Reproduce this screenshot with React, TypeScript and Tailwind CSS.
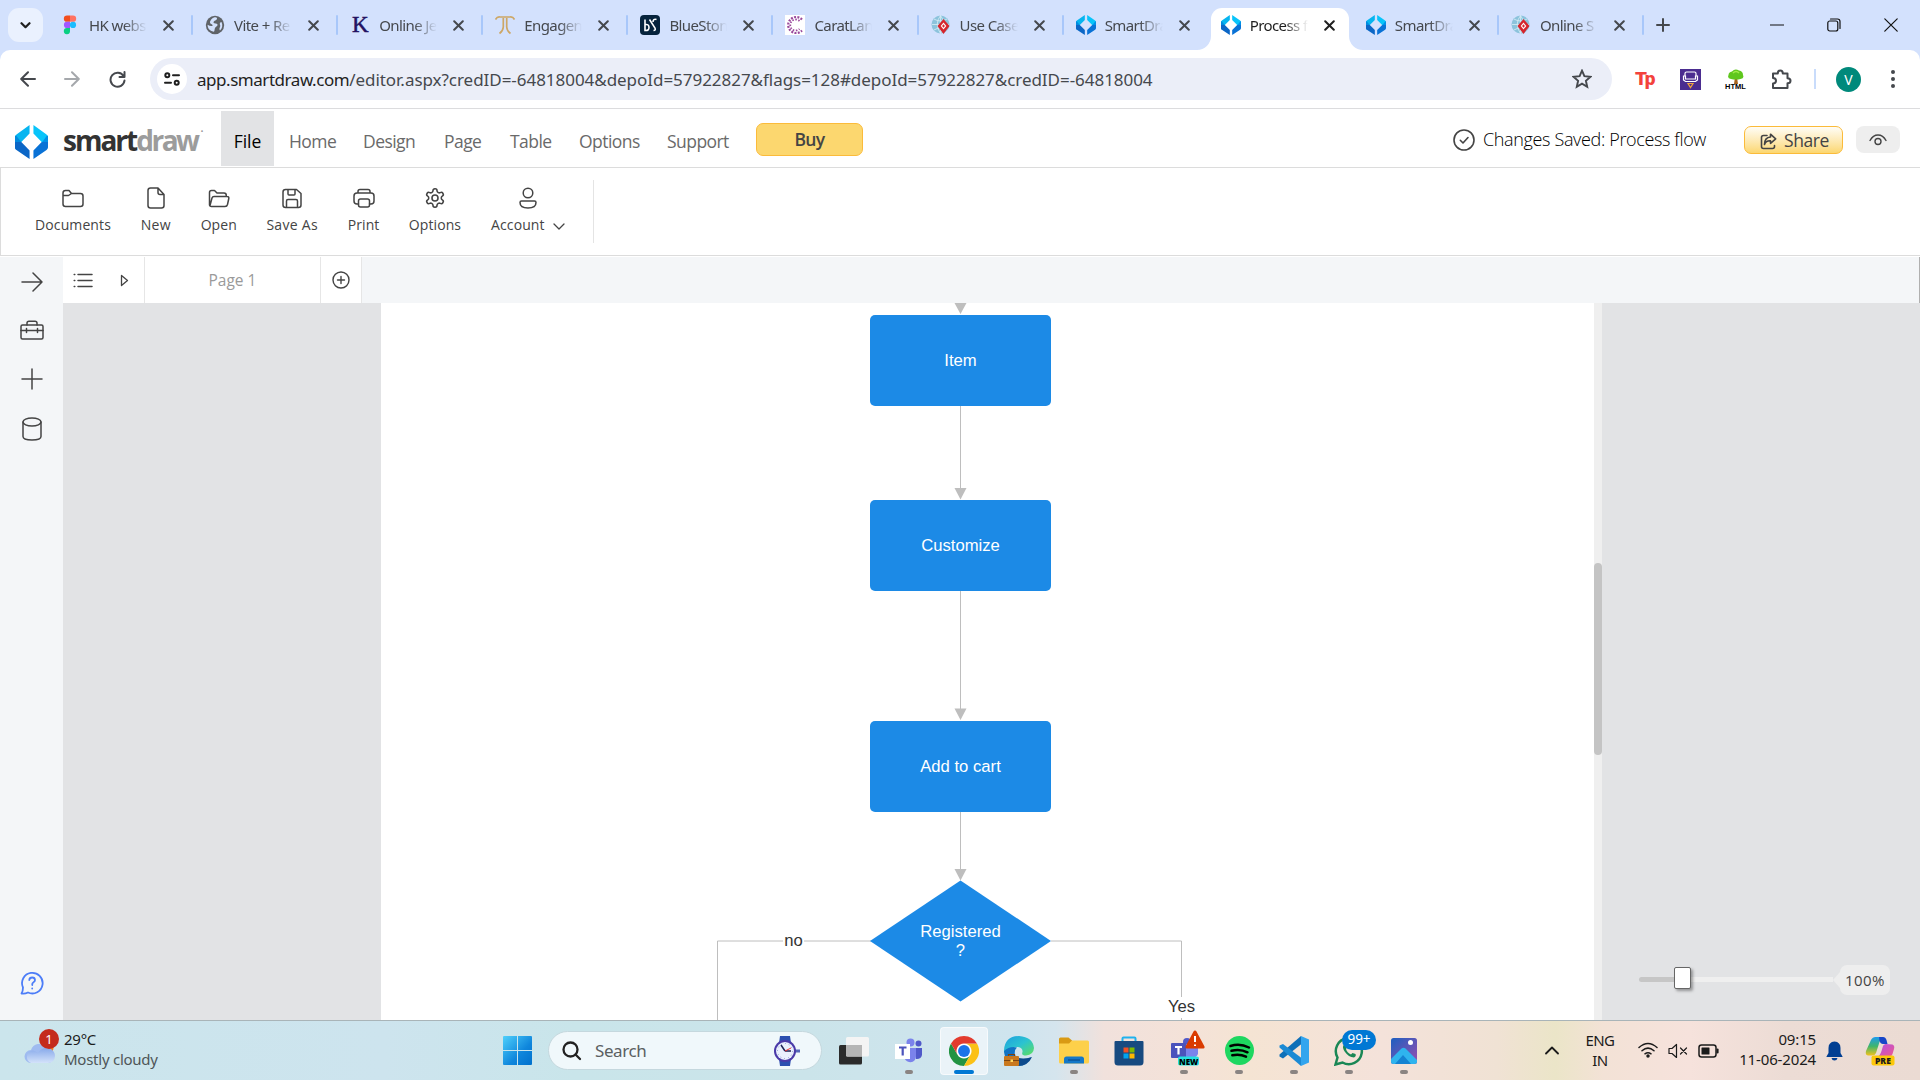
import React from "react";

const UI = "font-['Noto_Sans',sans-serif]";
const PLEX = "font-['Open_Sans',sans-serif]";

type Kids = { children?: React.ReactNode };

function T({ className = "", children }: Kids & { className?: string }) {
  return <span className={"inline-block whitespace-nowrap " + className}>{children}</span>;
}

function Line({ w, h, vb, sw = 1.5, className = "", children }: Kids & { w: number; h: number; vb?: string; sw?: number; className?: string }) {
  return (
    <svg width={w} height={h} viewBox={vb ?? `0 0 ${w} ${h}`} fill="none" stroke="currentColor" strokeWidth={sw} strokeLinecap="round" strokeLinejoin="round" className={"shrink-0 " + className}>
      {children}
    </svg>
  );
}

/* ---------- favicons ---------- */

function SmartDrawMark({ w, h }: { w: number; h: number }) {
  return (
    <svg width={w} height={h} viewBox="0 0 34 34" preserveAspectRatio="none" className="shrink-0">
      <path d="M15 0 1.5 9.5Q0 10.500 0 12L0 17H6.500L15 8.500Z" fill="#06b5f0" />
      <path d="M0 11V23Q0 24 1.500 25L6 17 6.500 17 1 10.500Z" fill="#008ade" />
      <path d="M0 17V22Q0 24 1.500 25L15 34V25.500L6.500 17Z" fill="#0b66c6" />
      <path d="M19 0 32.500 9.500Q34 10.500 34 12V17H27.500L19 8.500Z" fill="#08c4fa" />
      <path d="M34 11V23L28 17 33 10.500Z" fill="#0090e6" />
      <path d="M34 17V22Q34 24 32.500 25L19 34V25.500L27.500 17Z" fill="#0972d6" />
    </svg>
  );
}

function Figma() {
  return (
    <svg width="20" height="20" viewBox="0 0 20 20">
      <path d="M10 .5H7a3.100 3.100 0 0 0 0 6.300h3Z" fill="#f24e1e" />
      <path d="M10 .5h3a3.100 3.100 0 0 1 0 6.300h-3Z" fill="#ff7262" />
      <path d="M10 6.800H7A3.100 3.100 0 0 0 7 13h3Z" fill="#a259ff" />
      <circle cx="13" cy="9.900" r="3.100" fill="#1abcfe" />
      <path d="M7 13h3v3.200A3.100 3.100 0 1 1 7 13Z" fill="#0acf83" />
    </svg>
  );
}

function Globe() {
  return (
    <svg width="20" height="20" viewBox="0 0 20 20">
      <circle cx="10" cy="10" r="9.200" fill="#5f6368" />
      <path d="M9 2.500c3-.6 3.500.7 2.700 2-1 1.500-3.200 1.200-3.200 2.800 0 1.800 3.400.6 4 2.200.5 1.300-1.700 2-2.500 3.600-.6 1.300-.2 3.500-1.300 3.700C4.500 16 2.500 13 2.600 9.800c1.600 1 3 1.400 4.300 1.200 1.500-.3.500-1.800-.7-2.100-1.400-.4-1.600-2-.6-3.400C6.400 4.200 7.200 3 9 2.500ZM16.500 7c1.500 3 .8 6.500-1.500 8.500-.7-1-.7-2.300 0-3.500.8-1.300-.3-2-.2-3.200.1-1 .8-1.600 1.700-1.800Z" fill="#d3e1fd" />
    </svg>
  );
}

function LetterK() {
  return <span className="font-['Liberation_Serif',serif] text-[23px] leading-5 text-[#231262] [-webkit-text-stroke:0.5px_#231262]">K</span>;
}

function TanishqMark() {
  return (
    <svg width="20" height="20" viewBox="0 0 20 20" fill="none" stroke="#cda766" strokeWidth="1.700">
      <path d="M.5 4.500Q2 1.500 5 2H15Q18 1.500 19.500 4.500M8.300 3V12Q8 16 4.500 18.500M11.700 3V12Q12 16 15.500 18.500" />
    </svg>
  );
}

function BlueStone() {
  return (
    <svg width="20" height="20" viewBox="0 0 20 20" fill="none" stroke="#fff" strokeWidth="1.600">
      <rect width="20" height="20" rx="4" fill="#06233c" stroke="none" />
      <path d="M5 4.500V15.500Q9 16 9 12.500T5.500 9.500M9.500 4.500 15 13Q16 15.500 13.500 15.500M16.500 4.500Q13 3.500 13 7" />
    </svg>
  );
}

function CaratLane() {
  return (
    <svg width="20" height="20" viewBox="0 0 20 20" fill="none" stroke="#9a4a9c">
      <rect width="20" height="20" fill="#fff" stroke="none" />
      <path d="M17 4.500A8 8 0 1 0 17 15.500" strokeWidth="2.200" strokeDasharray="2 1.300" />
      <path d="M14.500 6A5.500 5.500 0 1 0 14.500 14" strokeWidth="1.800" strokeDasharray="1.500 1.500" />
    </svg>
  );
}

function Paradigm() {
  return (
    <svg width="20" height="20" viewBox="0 0 20 20">
      <circle cx="9.500" cy="9.500" r="9" fill="#8cc3dc" />
      <path d="M1 9.500H18M9.500 .5V18M3 4Q9.500 8 16 4M3 15Q9.500 11 16 15M9.500 .5Q3 9 9.500 18.500M9.500 .5Q16 9 9.500 18.500" stroke="#d9edf5" fill="none" strokeWidth=".8" />
      <path d="M12.500 4 18.500 11 12.500 19 6.500 11Z" fill="#d6252d" />
      <path d="M12.500 7.500 15.300 11 12.500 14.500 9.700 11Z" fill="#fff" />
      <path d="M12.500 9.300 13.900 11 12.500 12.800 11.100 11Z" fill="#d6252d" />
    </svg>
  );
}

const SdFav = () => <SmartDrawMark w={20} h={20} />;

const tabs: { icon: React.ReactNode; title: string; active?: boolean; divider?: boolean }[] = [
  { icon: <Figma />, title: "HK webs", divider: true },
  { icon: <Globe />, title: "Vite + Re", divider: true },
  { icon: <LetterK />, title: "Online Je", divider: true },
  { icon: <TanishqMark />, title: "Engagen", divider: true },
  { icon: <BlueStone />, title: "BlueSton", divider: true },
  { icon: <CaratLane />, title: "CaratLan", divider: true },
  { icon: <Paradigm />, title: "Use Case", divider: true },
  { icon: <SdFav />, title: "SmartDra" },
  { icon: <SdFav />, title: "Process f", active: true },
  { icon: <SdFav />, title: "SmartDra", divider: true },
  { icon: <Paradigm />, title: "Online S", divider: true },
];

function TabStrip() {
  return (
    <div className={"flex h-[50px] bg-[#d3e1fd] text-[#45484d] " + UI}>
      <div className="mt-2 ml-2 flex h-[34px] w-[35px] items-center justify-center rounded-[11px] bg-[#eaf1fe] text-[#1f1f1f]">
        <Line w={11} h={7} sw={2.200}><path d="M1.500 1.200 5.500 5.200 9.500 1.200" /></Line>
      </div>
      <div className="ml-[4px] flex">
        {tabs.map((t, i) => (
          <div key={i} className="relative flex h-[50px] w-[145.100px] items-center pl-[13px]">
            {t.active && (
              <div className="absolute top-[7.500px] bottom-0 left-[3px] w-[138px] rounded-t-[11px] bg-white">
                <svg width="14" height="14" className="absolute bottom-0 -left-[14px]"><path d="M14 0V14H0A14 14 0 0 0 14 0Z" fill="#fff" /></svg>
                <svg width="14" height="14" className="absolute -right-[14px] bottom-0"><path d="M0 0V14H14A14 14 0 0 1 0 0Z" fill="#fff" /></svg>
              </div>
            )}
            <div className="relative flex w-5 shrink-0 justify-center">{t.icon}</div>
            <div className={"relative ml-[9px] w-[58px] text-[15px] leading-[22px] tracking-[-0.6px] whitespace-nowrap [mask-image:linear-gradient(to_right,#000_60%,transparent)] " + (t.active ? "text-[#1f1f1f]" : "")}>{t.title}</div>
            <Line w={11} h={11} sw={2} className={"relative ml-[16px] " + (t.active ? "text-[#1f1f1f]" : "")}><path d="M1.200 1.200 9.800 9.800M9.800 1.200 1.200 9.800" /></Line>
            {t.divider && <div className="absolute top-[15px] right-[-1px] h-5 w-[2px] rounded bg-[#a8c7fa]" />}
          </div>
        ))}
      </div>
      <div className="flex flex-1 items-center pl-[13px]">
        <Line w={14} h={14} sw={2}><path d="M7 1V13M1 7H13" /></Line>
      </div>
      <div className="flex items-center gap-[43px] pr-[22px] text-[#111]">
        <Line w={14} h={14} sw={1.200}><path d="M.5 7H13.500" /></Line>
        <Line w={14} h={14} sw={1.200}><rect x=".8" y="3" width="10" height="10" rx="2" /><path d="M3.500 1H10.500Q13 1 13 3.500V10.500" /></Line>
        <Line w={14} h={14} sw={1.200}><path d="M.8 .8 13.200 13.200M13.200 .8 .8 13.200" /></Line>
      </div>
    </div>
  );
}

function AddressBar() {
  return (
    <div className="bg-[#d3e1fd]">
      <div className={"flex h-[59px] items-center rounded-t-[10px] border-b border-[#dcdcde] bg-white text-[#45484d] " + UI}>
        <Line w={16} h={16} sw={2} className="ml-[20px]"><path d="M15 8H1.500M8 1.200 1.200 8 8 14.800" /></Line>
        <Line w={16} h={16} sw={2} className="ml-[28px] text-[#a5a8ac]"><path d="M1 8H14.500M8 1.200 14.800 8 8 14.800" /></Line>
        <Line w={17} h={17} sw={2} className="ml-[29px]"><path d="M14.500 5A7 7 0 1 0 15.500 9.500M15.500 1V6H10.500" /></Line>
        <div className="ml-[24px] flex h-[42px] w-[1462px] items-center rounded-full bg-[#ebeef8]">
          <div className="ml-[7px] flex size-[30px] items-center justify-center rounded-full bg-white text-[#1f1f1f]">
            <Line w={16} h={14} sw={2}><circle cx="3.300" cy="3.300" r="2" /><path d="M9 3.300H15M1 10.700H7" /><circle cx="12.700" cy="10.700" r="2" /></Line>
          </div>
          <div className="ml-[10px] flex-1 pt-[2px] text-[17px] leading-6">
            <T className="tracking-[-0.460px] text-[#1f1f1f]">app.smartdraw.com</T>
            <T className="tracking-[-0.040px]">/editor.aspx?credID=-64818004&amp;depoId=57922827&amp;flags=128#depoId=57922827&amp;credID=-64818004</T>
          </div>
          <Line w={20} h={20} sw={1.900} className="mr-[20px]"><path d="M10 1.700 12.400 7.200 18.500 7.800 13.900 11.800 15.200 17.700 10 14.600 4.800 17.700 6.100 11.800 1.500 7.800 7.600 7.200Z" strokeLinejoin="miter" /></Line>
        </div>
        <div className="ml-[23px] flex h-5 w-5 items-center font-['Roboto',sans-serif] text-[19px] font-black tracking-[-1.500px] text-[#f3423c]">Tp</div>
        <svg width="21" height="21" viewBox="0 0 21 21" className="ml-[25px]" fill="none" stroke="#fff" strokeWidth="1.200">
          <rect width="21" height="21" fill="#4b2d90" stroke="none" />
          <path d="M5 7.500V4.500Q5 3 6.500 3H14.500Q16 3 16 4.500V7.500M3.500 7H5.500V10H15.500V7H17.500V11L15.500 12.500H5.500L3.500 11Z" />
          <path d="M8 14.500H13L10.500 18.500Z" stroke="#f2a33a" />
        </svg>
        <div className="ml-[24px] flex h-[21px] w-[21px] flex-col items-center">
          <svg width="18" height="15" viewBox="0 0 18 15" className="shrink-0">
            <path d="M8 8H10L11 15H7Z" fill="#a8641e" />
            <path d="M4 10Q0 9.500 1.500 6 1.500 3 5 2.500 8-1 12 1.500 16 2 16 6 17.500 9.500 13.500 10Q9 11 4 10Z" fill="#5fc71e" />
            <path d="M6 4Q9 1 12 4" stroke="#a0ea4a" strokeWidth="1.500" fill="none" />
          </svg>
          <span className="-mt-px font-['Liberation_Sans',sans-serif] text-[7.500px] leading-[7px] font-bold text-black">HTML</span>
        </div>
        <Line w={21} h={21} sw={2} className="ml-[25px]"><path d="M2 4.500H6.800Q6.800 1.500 9.300 1.500T11.800 4.500H16.500V9.300Q19.500 9.300 19.500 11.800T16.500 14.300V19H2V14.500Q5 14.500 5 11.800T2 9Z" /></Line>
        <div className="ml-[22px] h-5 w-[2px] bg-[#c9dcfb]" />
        <div className="ml-[20px] flex size-[25px] items-center justify-center rounded-full bg-[#00897b] text-[14px] text-white">V</div>
        <svg width="4" height="20" className="ml-[30px]" fill="#45484d"><circle cx="2" cy="3" r="2" /><circle cx="2" cy="10" r="2" /><circle cx="2" cy="17" r="2" /></svg>
      </div>
    </div>
  );
}

/* ---------- SmartDraw header ---------- */

function Header() {
  return (
    <div className={"flex h-[59px] border-b border-[#dcdcdc] bg-white text-[17.500px] leading-6 text-[#6a6a6a] " + PLEX}>
      <div className="flex w-[221px] items-center pl-[15px]">
        <div className="pt-[7px]"><SmartDrawMark w={33} h={34} /></div>
        <div className="ml-[15px] flex pt-[3px] text-[28px] font-bold text-[#333]">
          <T className="tracking-[-2px]">smart</T>
          <T className="tracking-[-2.500px] text-[#9c9c9c]">draw</T>
          <span className="mt-[-1px] ml-[3px] text-[8px] leading-[8px] font-normal text-[#9c9c9c]">•</span>
        </div>
      </div>
      <div className="mt-[2px] flex h-[55px] w-[53px] items-center justify-center bg-[#e2e3e5] pt-[5px] text-black">File</div>
      <div className="ml-[15px] flex items-center pt-[6px] tracking-[-0.550px]">
        <div className="w-[74px]">Home</div>
        <div className="w-[81px]">Design</div>
        <div className="w-[66px]">Page</div>
        <div className="w-[69px]">Table</div>
        <div className="w-[88px]">Options</div>
        <div className="w-[89px]">Support</div>
      </div>
      <div className="mt-[14px] flex h-[33px] w-[107px] items-center justify-center rounded-[7px] border border-[#fbbb3a] bg-[#fcd76f] pb-[2px] font-semibold tracking-[-0.600px] text-[#444]">Buy</div>
      <div className="ml-auto flex items-start pr-[20px]">
        <Line w={22} h={22} sw={1.600} className="mt-[20px] text-[#444]"><circle cx="11" cy="11" r="10" /><path d="M7.300 11.300 10 14 15 8.500" /></Line>
        <div className="mt-[18px] ml-[8px] w-[261px] text-[18px] font-light tracking-[-0.350px] text-black">Changes Saved: Process flow</div>
        <div className="mt-[17px] flex h-7 w-[99px] items-center rounded-[7px] border border-[#fbbb3a] bg-linear-to-b from-[#fffdf6] to-[#fcd76f] pl-[15px] text-[#444]">
          <Line w={17} h={17} sw={1.600} className="mt-[3px]"><path d="M7 2.500H3.500Q1.500 2.500 1.500 4.500V13.500Q1.500 15.500 3.500 15.500H12.500Q14.500 15.500 14.500 13.500V12.500M10.500 1.200 15.700 5.800 10.500 10.300V7.800Q6 7.500 4.500 11.500 4.500 4.500 10.500 4Z" /></Line>
          <div className="ml-[7px] tracking-[-0.400px]">Share</div>
        </div>
        <div className="mt-[17px] ml-[13px] flex h-[27px] w-11 items-center justify-center rounded-[8px] bg-[#eee] text-[#444]">
          <Line w={18} h={12} sw={1.400}><path d="M1 6.500Q4 1 9 1T17 6.500" /><circle cx="9" cy="7.500" r="3" /></Line>
        </div>
      </div>
    </div>
  );
}

function RibbonItem({ cls, icon, children }: Kids & { cls: string; icon: React.ReactNode }) {
  return (
    <div className={"flex flex-col items-center " + cls}>
      <div className="flex h-6 items-center justify-center">{icon}</div>
      <div className="mt-[5px] flex h-5 items-center">{children}</div>
    </div>
  );
}

function Ribbon() {
  return (
    <div className={"flex h-[88px] gap-[29.400px] border-b border-l border-[#dcdcdc] bg-white pt-[18px] pl-[34px] text-[14px] leading-5 tracking-[0.100px] text-[#444] " + PLEX}>
      <RibbonItem cls="w-[76px]" icon={<Line w={22} h={19}><path d="M1 4Q1 1.500 3.500 1.500H7L9.500 4.500H18.500Q21 4.500 21 7V15Q21 17.500 18.500 17.500H3.500Q1 17.500 1 15ZM1 6.500H6.500L9.500 4.500" /></Line>}><T>Documents</T></RibbonItem>
      <RibbonItem cls="w-[31px]" icon={<Line w={18} h={22}><path d="M3.500 1H11L17 7.500V18.500Q17 21 14.500 21H3.500Q1 21 1 18.500V3.500Q1 1 3.500 1ZM11 1V5.500Q11 7.500 13 7.500H17" /></Line>}><T className="tracking-[0.400px]">New</T></RibbonItem>
      <RibbonItem cls="w-[36px]" icon={<Line w={22} h={19}><path d="M1.500 16V3.500Q1.500 1.500 3.500 1.500H6.500L9 4H16Q18.300 4 18.300 6.500V7.500M2 16.500 4 9Q4.500 7.500 6 7.500H19Q21.200 7.500 20.800 9.500L19.500 15.500Q19 17.500 17 17.500H3.500Q1.500 17.500 1.500 15.500" /></Line>}><T>Open</T></RibbonItem>
      <RibbonItem cls="w-[52px]" icon={<Line w={20} h={21}><path d="M3.500 1.500H14.500L19 5.500V17Q19 19.500 16.500 19.500H3.500Q1 19.500 1 17V4Q1 1.500 3.500 1.500ZM6 1.500V6Q6 7 7 7H12Q13 7 13 6V1.500M4.500 19.500V13Q4.500 11.500 6 11.500H14Q15.500 11.500 15.500 13V19.500" /></Line>}><T className="tracking-[0.300px]">Save As</T></RibbonItem>
      <RibbonItem cls="w-[32px]" icon={<Line w={22} h={20}><path d="M5.500 16H4Q1 16 1 13V8Q1 5 4 5H18Q21 5 21 8V13Q21 16 18 16H16.500M5 5V3.500Q5 1.500 7 1.500H15Q17 1.500 17 3.500V5" /><rect x="5.500" y="11" width="11" height="8" rx="2" /></Line>}><T>Print</T></RibbonItem>
      <RibbonItem cls="w-[52px]" icon={<Line w={22} h={22} vb="0 0 24 24" sw={1.700}><path d="M12.220 2h-.44a2 2 0 0 0-2 2v.18a2 2 0 0 1-1 1.730l-.43.25a2 2 0 0 1-2 0l-.15-.08a2 2 0 0 0-2.730.73l-.22.38a2 2 0 0 0 .73 2.730l.15.1a2 2 0 0 1 1 1.720v.51a2 2 0 0 1-1 1.740l-.15.09a2 2 0 0 0-.73 2.730l.22.38a2 2 0 0 0 2.730.73l.15-.08a2 2 0 0 1 2 0l.43.25a2 2 0 0 1 1 1.730V20a2 2 0 0 0 2 2h.44a2 2 0 0 0 2-2v-.18a2 2 0 0 1 1-1.730l.43-.25a2 2 0 0 1 2 0l.15.08a2 2 0 0 0 2.730-.73l.22-.39a2 2 0 0 0-.73-2.730l-.15-.08a2 2 0 0 1-1-1.740v-.5a2 2 0 0 1 1-1.740l.15-.09a2 2 0 0 0 .73-2.730l-.22-.38a2 2 0 0 0-2.730-.73l-.15.08a2 2 0 0 1-2 0l-.43-.25a2 2 0 0 1-1-1.730V4a2 2 0 0 0-2-2z" /><circle cx="12" cy="12" r="3.300" /></Line>}><T>Options</T></RibbonItem>
      <RibbonItem cls="w-[75px]" icon={<Line w={18} h={22}><circle cx="9" cy="6" r="4.800" /><path d="M2.500 14H15.500Q17 14 17 15.500 17 21 9 21T1 15.500Q1 14 2.500 14Z" /></Line>}>
        <T>Account</T>
        <Line w={12} h={7} sw={1.300} className="mt-[3px] ml-[8px]"><path d="M1 1 6 6 11 1" /></Line>
      </RibbonItem>
      <div className="-mt-[6px] -ml-[2px] h-[63px] w-px bg-[#e4e4e4]" />
    </div>
  );
}

function PageTabs() {
  return (
    <div className={"flex h-[46px] w-full border-r border-[#b0b0b0] bg-[#f4f6f8] text-[#444] " + PLEX}>
      <div className="flex w-[82px] items-center border-r border-[#e6e6e6] bg-white pl-[10px]">
        <Line w={20} h={17} sw={1.500}><path d="M5 2.500H19M5 8.500H19M5 14.500H19M1.200 2.500H1.800M1.200 8.500H1.800M1.200 14.500H1.800" /></Line>
        <Line w={9} h={13} sw={1.300} className="ml-[27px]"><path d="M1.500 1.500 7.500 6.500 1.500 11.500Z" /></Line>
      </div>
      <div className="flex w-[176px] items-center justify-center border-r border-[#e6e6e6] bg-white pt-[2px] text-[15.500px] text-[#9a9a9a]">Page 1</div>
      <div className="flex w-[41px] items-center justify-center border-r border-[#e6e6e6] bg-white">
        <Line w={18} h={18} sw={1.400}><circle cx="9" cy="9" r="8" /><path d="M9 5.500V12.500M5.500 9H12.500" /></Line>
      </div>
    </div>
  );
}

function SideBar() {
  return (
    <div className="flex w-[63px] flex-col items-center bg-[#f4f6f8] text-[#444]">
      <Line w={22} h={20} className="mt-[15px]"><path d="M1 10H21M12 1 21 10 12 19" /></Line>
      <Line w={24} h={20} className="mt-[28px]"><rect x="1" y="5" width="22" height="14" rx="1.500" /><path d="M7 5V3Q7 1.200 9 1.200H15Q17 1.200 17 3V5M1 10.500H23M6.500 8.500V12.500M17.500 8.500V12.500" /></Line>
      <Line w={22} h={22} className="mt-[28px]"><path d="M11 1V21M1 11H21" /></Line>
      <Line w={20} h={24} className="mt-[27px]"><ellipse cx="10" cy="5" rx="9" ry="4" /><path d="M1 5V19.500Q1 23 10 23T19 19.500V5" /></Line>
      <Line w={24} h={24} sw={1.800} className="mt-auto mb-[25px] text-[#4c7df8]"><path d="M3 16.500A10.300 10.300 0 1 1 8 21.500Q5 23 1.500 22.500 3 20 3 16.500Z" /><path d="M9.300 9Q9.500 6.500 12.200 6.500T15 9Q15 10.500 13.500 11.300T12.200 14M12.200 17.300V17.500" /></Line>
    </div>
  );
}

/* ---------- flowchart ---------- */

function Node({ cls, children }: Kids & { cls: string }) {
  return <div className={"absolute left-[489px] flex h-[91px] w-[181px] items-center justify-center rounded-[5px] bg-[#1c8ae6] text-white " + cls}>{children}</div>;
}

function Page() {
  return (
    <div className="relative w-[1213px] overflow-hidden bg-white font-['Liberation_Sans',sans-serif] text-[16.670px] leading-[19px]">
      <svg width="1213" height="717" className="absolute inset-0" fill="none" stroke="#bebebe">
        <path d="M579.500 102V192M579.500 288V412M579.500 508V572M490 638H336.500V720M670 638H800.500V720" />
        <path d="M573.500 0H585.500L579.500 11ZM573.500 185H585.500L579.500 196.500ZM573.500 405.500H585.500L579.500 417ZM573.500 566H585.500L579.500 577.500Z" fill="#bebebe" stroke="none" />
        <path d="M579.500 577.500 670 638 579.500 698.500 489 638Z" fill="#1c8ae6" stroke="none" />
      </svg>
      <Node cls="top-[11.500px]">Item</Node>
      <Node cls="top-[197px]">Customize</Node>
      <Node cls="top-[417.500px]">Add to cart</Node>
      <div className="absolute top-[619px] left-[489px] w-[181px] text-center text-white">Registered<br />?</div>
      <div className="absolute top-[628px] left-[402px] w-[21px] bg-white text-center text-[#333]">no</div>
      <div className="absolute top-[694px] left-[785px] h-[21px] w-[31px] bg-white text-center text-[#333]">Yes</div>
    </div>
  );
}

function ZoomControl() {
  return (
    <div className="flex flex-1 flex-col justify-end bg-[#e2e3e5]">
      <div className="mb-[25px] ml-[37px] flex h-[30px] items-center">
        <div className="-mt-[2px] h-[5px] w-[35px] rounded-l-full bg-[#c6c6c6]" />
        <div className="z-10 -mt-[4px] h-[22px] w-[17px] rounded-[2px] border border-[#666] bg-white shadow-[2px_2px_3px_rgba(0,0,0,0.35)]" />
        <div className="-mt-[2px] h-[5px] w-[142px] bg-[#efefef]" />
        <svg width="7" height="16"><path d="M0 8 7 0V16Z" fill="#eee" /></svg>
        <div className={"flex h-[30px] w-[50px] items-center rounded-[7px] bg-[#eee] pl-[5px] text-[15px] tracking-[0.400px] text-[#444] " + PLEX}>100%</div>
      </div>
    </div>
  );
}

/* ---------- Windows taskbar ---------- */

function Cell({ mark, active, children }: Kids & { mark?: boolean; active?: boolean }) {
  return (
    <div className={"relative flex size-12 items-center justify-center rounded-[4px] " + (active ? "border border-white/60 bg-[#eaf3f8]" : "")}>
      {children}
      {mark && <div className="absolute bottom-px h-1 w-2 rounded-full bg-[#8a8482]" />}
      {active && <div className="absolute bottom-0 h-1 w-5 rounded-full bg-[#0078d4]" />}
    </div>
  );
}

function Chrome() {
  return (
    <svg width="30" height="30" viewBox="0 0 48 48">
      <circle cx="24" cy="24" r="12" fill="#fff" />
      <path d="M13.609 30.003 3.218 12.006A23.994 23.994 0 0 0 24.002 48L34.393 30.003A11.985 11.985 0 0 1 13.609 30.003Z" fill="#229342" />
      <path d="M34.391 30.003 24.001 48A23.994 23.994 0 0 0 44.780 12.003H24A11.985 11.985 0 0 1 34.391 30.003Z" fill="#fbc116" />
      <path d="M24.002 12H44.780A23.994 23.994 0 0 0 3.218 12.006L13.609 30.002A11.985 11.985 0 0 1 24.002 12Z" fill="#e33b2e" />
      <circle cx="24" cy="24" r="9.500" fill="#1a73e8" />
    </svg>
  );
}

function Taskbar() {
  return (
    <div className={"flex h-[60px] items-center border-t border-[#a9b4b8] bg-[linear-gradient(90deg,#cbe5ec_0%,#cde4ee_20%,#c9e5ea_30%,#cbe4ea_42%,#cfe4ee_53%,#d5e5ee_55%,#f1e1dc_57.500%,#f4e2d8_62%,#f5e4d3_65%,#f4e2da_72%,#f0e2d4_78%,#ebe5c8_81%,#f3e2d6_83.500%,#f6e2dc_88%,#ecdcd5_93%,#ebdbd3_100%)] text-[15px] text-[#1b1b1b] " + UI}>
      <div className="flex w-[503px] items-center pl-[24px]">
        <div className="relative">
          <svg width="32" height="24" viewBox="0 0 32 24" className="mt-[4px]">
            <defs><linearGradient id="cl" x1="0" y1="0" x2="0" y2="1"><stop offset="0" stopColor="#87a9ea" /><stop offset="1" stopColor="#d3e2fa" /></linearGradient></defs>
            <circle cx="24" cy="7" r="5.500" fill="#f47b1c" />
            <path d="M7 22A6.500 6.500 0 0 1 7 9 8.500 8.500 0 0 1 22 6.500 8 8 0 0 1 25 22Z" fill="#9fbbf0" />
            <path d="M7 22A6.500 6.500 0 0 1 9 9.500Q12 10 14 12 19 5 26 8 31 10 31 15 30.500 22 24 22Z" fill="url(#cl)" />
          </svg>
          <div className="absolute -top-[8px] left-[15px] flex size-5 items-center justify-center rounded-full bg-[#c42b1c] text-[13px] leading-5 text-white">1</div>
        </div>
        <div className="ml-[8px] pb-[4px] leading-5 tracking-[-0.250px]">
          <div>29°C</div>
          <div className="text-[#4f5658]">Mostly cloudy</div>
        </div>
      </div>
      <svg width="29" height="29" viewBox="0 0 29 29">
        <defs><linearGradient id="wn" x1="0" y1="0" x2="1" y2="1"><stop offset="0" stopColor="#4fd0fb" /><stop offset=".6" stopColor="#0f86dc" /><stop offset="1" stopColor="#0070cc" /></linearGradient></defs>
        <path d="M1 0H14V14H0V1Q0 0 1 0ZM15 0H28Q29 0 29 1V14H15ZM0 15H14V29H1Q0 29 0 28ZM15 15H29V28Q29 29 28 29H15Z" fill="url(#wn)" />
      </svg>
      <div className="ml-[16px] flex h-[39px] w-[274px] items-center rounded-full border border-[#c5d8de] bg-[#f0f8fb] pl-[13px]">
        <Line w={20} h={20} sw={2.300} className="text-[#222]"><circle cx="8.500" cy="8.500" r="7" /><path d="M13.500 13.500 18 18" /></Line>
        <div className="ml-[13px] flex-1 text-[17px] tracking-[-0.400px] text-[#5a5f61]">Search</div>
        <svg width="28" height="32" viewBox="0 0 28 32" className="mr-[20px]">
          <path d="M7 1H17L18 8H6ZM6 24H18L17 31H7Z" fill="#2c4fb0" />
          <path d="M22 16H27" stroke="#5566b8" strokeWidth="3" />
          <circle cx="12" cy="16" r="11" fill="#4a3aa8" />
          <circle cx="12" cy="16" r="9" fill="#eaf0fd" />
          <path d="M12 16 8 10M12 16H18" stroke="#1d2255" strokeWidth="1.500" />
          <path d="M12 16 18 13" stroke="#e33" />
          <circle cx="12" cy="16" r="7.500" fill="none" stroke="#7c86c8" strokeDasharray=".8 3.100" />
        </svg>
      </div>
      <div className="ml-[8px] flex gap-[7px]">
        <Cell>
          <svg width="30" height="28"><rect y="8" width="23" height="19.500" rx="1.500" fill="#2b2b2b" /><rect x="7" width="23" height="19.500" rx="1.500" fill="#f4f4f4" /><path d="M7 8H23V19.500H8.500Q7 19.500 7 18Z" fill="#b5b5b5" /></svg>
        </Cell>
        <Cell mark>
          <svg width="28" height="26" viewBox="0 0 28 26">
            <circle cx="15.500" cy="4.500" r="4" fill="#7b83eb" /><circle cx="23.500" cy="5.500" r="3" fill="#5059c9" />
            <path d="M19 10H27V17Q26 21.500 21 21Z" fill="#5059c9" /><path d="M9 10H21V18Q20.500 25 14 24 9.500 23 9 18Z" fill="#7b83eb" />
            <rect y="6" width="15" height="15" fill="#fff" /><path d="M4 9.500H11.500M7.700 9.500V17.500" stroke="#4b53bc" strokeWidth="2.200" />
          </svg>
        </Cell>
        <Cell active><Chrome /></Cell>
        <Cell>
          <svg width="30" height="30" viewBox="0 0 30 30">
            <defs><linearGradient id="ed" x1="0" y1="0" x2="1" y2="1"><stop offset="0" stopColor="#1d9fe0" /><stop offset=".5" stopColor="#2cc3d0" /><stop offset="1" stopColor="#5fe05a" /></linearGradient></defs>
            <path d="M0 14Q1 0 15 0 29 1 30 12 29.500 19 22 19.500 17 19.500 18.500 16 19 12 14 11 6 10 0 17Z" fill="url(#ed)" />
            <path d="M0 15Q6 9.500 13 11.500 10 14 11 19 14 26 27 21.500 23 30 14 30 1 29 0 15Z" fill="#1273c4" />
            <path d="M12 20Q16 24.500 28 21 24 30 14 30Z" fill="#0c4a8c" />
            <rect y="20" width="15" height="10" rx="1" fill="#c9781e" /><path d="M0 24.500H15M4.500 20V18.500H10.500V20" stroke="#7c4410" strokeWidth="1.200" fill="none" /><rect x="6.500" y="23.500" width="2.500" height="2.500" fill="#ffd75e" />
          </svg>
        </Cell>
        <Cell mark>
          <svg width="30" height="27" viewBox="0 0 30 27"><path d="M0 2Q0 .5 1.500 .5H9.500L13 3.500V9H0Z" fill="#d99a14" /><path d="M0 6.500H10L13 3.500H28.500Q30 3.500 30 5V25Q30 26.500 28.500 26.500H1.500Q0 26.500 0 25Z" fill="#fdd04a" /><path d="M5 26.500V22Q5 19.500 7.500 19.500H22.500Q25 19.500 25 22V26.500Z" fill="#1578c8" /><path d="M9 23H21" stroke="#0b4f92" strokeWidth="1.300" /></svg>
        </Cell>
        <Cell>
          <svg width="30" height="30" viewBox="0 0 30 30"><path d="M8.500 6V2.500Q8.500 1.500 9.500 1.500H20.500Q21.500 1.500 21.500 2.500V6" fill="none" stroke="#1fb2ee" strokeWidth="2" /><path d="M.5 6Q.5 5 1.500 5H28.500Q29.500 5 29.500 6V26Q29.500 29.500 26 29.500H4Q.5 29.500 .5 26Z" fill="#174a80" /><path d="M9.500 11.500H14.500V16.500H9.500Z" fill="#f25022" /><path d="M15.500 11.500H20.500V16.500H15.500Z" fill="#7fba00" /><path d="M9.500 17.500H14.500V22.500H9.500Z" fill="#00a4ef" /><path d="M15.500 17.500H20.500V22.500H15.500Z" fill="#ffb900" /></svg>
        </Cell>
        <Cell mark>
          <svg width="36" height="36" viewBox="0 0 36 36" className="-mt-[5px] ml-[5px]">
            <circle cx="18" cy="12" r="4" fill="#5059c9" /><path d="M14 14H29V24Q27 29 20 28H14Z" fill="#7b83eb" /><rect x="2" y="13" width="15" height="15" rx="1" fill="#4b53bc" /><path d="M6 17H13M9.500 17V24.500" stroke="#fff" strokeWidth="2.200" />
            <path d="M26 .5Q27 .5 27.500 1.500L35.500 16.500Q36 18.500 34.500 18.500H17.500Q16 18.500 16.500 16.500L24.500 1.500Q25 .5 26 .5Z" fill="#da3b01" /><path d="M26 6V12M26 14.500V16" stroke="#fff" strokeWidth="2" />
            <rect x="9" y="26.500" width="21" height="9" rx="2" fill="#25e0e0" />
          </svg>
          <span className="absolute top-[30px] left-[19px] text-[8px] leading-[9px] font-black text-black">NEW</span>
        </Cell>
        <Cell mark>
          <svg width="29" height="29" viewBox="0 0 29 29"><circle cx="14.500" cy="14.500" r="14.500" fill="#1ed760" /><path d="M5.500 10Q15 7 24 11.500M6.500 14.800Q15 12.500 22.500 16.300M7.300 19.300Q14.500 17.500 21 20.700" stroke="#000" strokeWidth="2.500" fill="none" strokeLinecap="round" /></svg>
        </Cell>
        <Cell mark>
          <svg width="30" height="30" viewBox="0 0 30 30"><path d="M22 0 22.500 8 4 22.500 .5 20.500V18.500Z" fill="#0f70b8" /><path d="M22 30 22.500 22 4 8 .5 9.500V11.500Z" fill="#1c8ad4" /><path d="M22 0 30 3.500V26.500L22 30Z" fill="#33a5ee" /></svg>
        </Cell>
        <Cell mark>
          <svg width="30" height="30" viewBox="0 0 30 30" fill="none" stroke="#1a8755" strokeWidth="2.500"><path d="M1.500 28.500 3.500 21.500A13 13 0 1 1 8.500 26.500Z" /><path d="M10 8.500Q7.500 11 11 16T20 21.500Q22.500 20 21.500 18L18.500 17 17 18.500Q13 16.500 12 13L13 11.500 12 8.500Z" fill="#1a8755" stroke="none" /></svg>
          <div className="absolute top-[3px] left-[17px] flex h-5 w-[34px] items-center justify-center rounded-full bg-[#0078d4] text-[13.500px] text-white">99+</div>
        </Cell>
        <Cell mark>
          <svg width="26" height="26" viewBox="0 0 26 26"><defs><linearGradient id="ph" x1="0" y1="0" x2="1" y2="1"><stop offset="0" stopColor="#1c5fc0" /><stop offset="1" stopColor="#9a4fb0" /></linearGradient></defs><rect width="26" height="26" rx="2.500" fill="url(#ph)" /><path d="M0 21 10.500 10.500Q12.500 9 14.500 10.500L26 22V23.500Q26 26 23.500 26H2.500Q0 26 0 23.500Z" fill="#2fb4ee" /><path d="M12 17 20 26H4Z" fill="#1583d2" /><circle cx="19.500" cy="4.500" r="2.500" fill="#fff" /></svg>
        </Cell>
      </div>
      <div className="ml-auto flex items-center">
        <Line w={14} h={9} sw={1.800}><path d="M1 7.500 7 1.500 13 7.500" /></Line>
        <div className="ml-[25px] w-[32px] pb-[2px] text-center leading-5 tracking-[-0.600px]">ENG<br />IN</div>
        <Line w={20} h={16} sw={1.500} className="-mt-[2px] ml-[22px]"><path d="M1 5.500Q10-2.500 19 5.500M4 8.800Q10 3.500 16 8.800M7 11.800Q10 9.500 13 11.800" /><circle cx="10" cy="14" r="1" fill="currentColor" /></Line>
        <Line w={20} h={16} sw={1.200} className="ml-[10px]"><path d="M1 5.500H4L8.500 1.500V14.500L4 10.500H1ZM12.500 5 18.500 11M18.500 5 12.500 11" /></Line>
        <Line w={21} h={14} sw={1.500} className="ml-[10px]"><rect x="1" y="1" width="17" height="12" rx="2.500" /><rect x="3.500" y="3.500" width="8" height="7" rx=".5" fill="currentColor" stroke="none" /><path d="M19.500 5.500V8.500" strokeWidth="2.200" /></Line>
        <div className="ml-[17px] w-[80px] pb-[4px] text-right leading-5 tracking-[-0.150px]">09:15<br />11-06-2024</div>
        <svg width="17" height="20" viewBox="0 0 17 20" className="ml-[10px]" fill="#003e92"><path d="M8.500 .5Q14.500 1 14.500 7V12L16.500 15.500V16H.5V15.500L2.500 12V7Q2.500 1 8.500 .5ZM5.500 17H11.500Q11 19.500 8.500 19.500T5.500 17Z" /></svg>
        <div className="relative mr-[25px] ml-[22px]">
          <svg width="30" height="30" viewBox="0 0 30 30">
            <defs><linearGradient id="cp" x1="0" y1="0" x2="0" y2="1"><stop offset="0" stopColor="#1d9bf0" /><stop offset=".5" stopColor="#3fb56c" /><stop offset="1" stopColor="#f2c21c" /></linearGradient><linearGradient id="cq" x1="0" y1="0" x2="1" y2="1"><stop offset="0" stopColor="#b050e8" /><stop offset="1" stopColor="#f0588c" /></linearGradient></defs>
            <path d="M6 4Q7.500 1 10.500 1H19Q16 1.500 14.500 6L11 17Q10 19.500 7 19.500H3Q0 19 1 15Z" fill="url(#cp)" />
            <path d="M14 1H18Q20.500 1 21.500 4L22.500 8H18Q15.500 8 14.500 5Z" fill="#1746c8" />
            <path d="M27.500 8.500Q30 9.500 29 13L27.500 18Q26.500 21 23 21H12Q15 20 16.500 15L18 10Q18.500 8.500 20.500 8Z" fill="url(#cq)" />
            <rect x="6.500" y="19.500" width="23" height="10" rx="2" fill="#fcc80a" />
          </svg>
          <span className="absolute top-[20px] left-[10px] text-[8.500px] leading-[9px] font-black">PRE</span>
        </div>
      </div>
    </div>
  );
}

export default function App() {
  return (
    <div className="flex h-[1080px] w-[1920px] flex-col overflow-hidden bg-white">
      <TabStrip />
      <AddressBar />
      <Header />
      <Ribbon />
      <div className="flex min-h-0 flex-1 pt-px">
        <SideBar />
        <div className="flex flex-1 flex-col">
          <PageTabs />
          <div className="flex min-h-0 flex-1">
            <div className="w-[318px] bg-[#e2e3e5]" />
            <Page />
            <div className="w-2 bg-[#efefef] pt-[260px]"><div className="h-[192px] rounded-full bg-[#c4c4c4]" /></div>
            <ZoomControl />
          </div>
        </div>
      </div>
      <Taskbar />
    </div>
  );
}
